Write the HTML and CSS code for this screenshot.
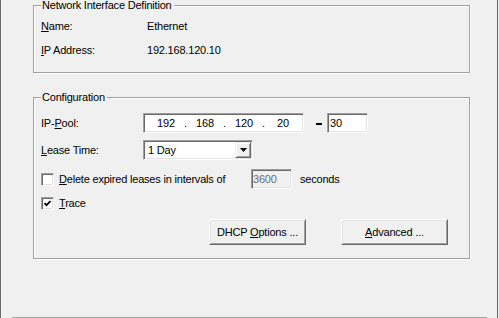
FILE: index.html
```html
<!DOCTYPE html>
<html lang="en">
<head>
  <meta charset="UTF-8">
  <title>DHCP Server – Ethernet</title>
  <link rel="stylesheet" href="styles.css">
</head>
<body>
  <div class="frame">
    <div class="groups">
      <fieldset class="group group-nic">
        <legend>Network Interface Definition</legend>
        <div class="info-row"><span class="info-label"><u>N</u>ame:</span><span>Ethernet</span></div>
        <div class="info-row"><span class="info-label"><u>I</u>P Address:</span><span>192.168.120.10</span></div>
      </fieldset>

      <fieldset class="group group-config">
        <legend>Configuration</legend>
        <div class="field-row">
          <span class="field-label">IP-<u>P</u>ool:</span>
          <div class="ip-box">
            <span class="octet">192</span><span class="dot">.</span>
            <span class="octet">168</span><span class="dot">.</span>
            <span class="octet">120</span><span class="dot">.</span>
            <span class="octet">20</span>
          </div>
          <span class="dash"></span>
          <div class="text-box range-end">30</div>
        </div>

        <div class="field-row lease-row">
          <span class="field-label"><u>L</u>ease Time:</span>
          <div class="combo">
            <span class="combo-value">1 Day</span>
            <span class="combo-btn">
              <svg width="7" height="4" viewBox="0 0 7 4"><path d="M0 0h7L3.5 4z" fill="#000"/></svg>
            </span>
          </div>
        </div>

        <div class="check-row delete-row">
          <span class="check"></span>
          <span class="check-text"><u>D</u>elete expired leases in intervals of</span>
          <div class="text-box interval disabled">3600</div>
          <span class="unit">seconds</span>
        </div>

        <div class="check-row trace-row">
          <span class="check">
            <svg width="9" height="9" viewBox="0 0 9 9"><path d="M1.5 4.2l2 2 4-4" fill="none" stroke="#000" stroke-width="1.8"/></svg>
          </span>
          <span class="check-text"><u>T</u>race</span>
        </div>

        <div class="button-row">
          <button class="btn btn-options">DHCP <u>O</u>ptions ...</button>
          <button class="btn btn-advanced"><u>A</u>dvanced ...</button>
        </div>
      </fieldset>
    </div>
    <div class="next-group"></div>
  </div>
</body>
</html>
```

FILE: styles.css
```css
body { margin:0; background:#f0f0f0; font-family:"Liberation Sans", Arial, sans-serif; font-size:11px; line-height:13px; letter-spacing:-0.2px; color:#000; }
u { text-decoration:underline; text-underline-offset:1px; }

.frame { width:498px; height:318px; box-sizing:border-box; border-left:1px solid #696969; border-right:1px solid #696969; overflow:hidden; }
.groups { padding-left:32px; }

.group { width:437px; box-sizing:border-box; margin:0; border:1px solid #a0a0a0; box-shadow:1px 1px 0 #fff, inset 1px 1px 0 #fff; padding:0 7px; }
.group legend { padding:0 2px 0 1px; background:#f0f0f0; line-height:13px; }
.group-nic { margin-top:-1px; padding-top:8px; padding-bottom:15px; }
.group-config { margin-top:18px; padding-top:9px; padding-bottom:13px; }

.info-row { display:flex; }
.info-row + .info-row { margin-top:11px; }
.info-label { width:106px; }

.field-row { display:flex; align-items:center; height:20px; }
.lease-row { margin-top:7px; }
.field-label { width:102px; }

/* sunken 3d edit boxes */
.ip-box, .text-box, .combo, .check { box-sizing:border-box; background:#fff; border:1px solid; border-color:#a0a0a0 #fff #fff #a0a0a0; box-shadow:inset 1px 1px 0 #696969, inset -1px -1px 0 #e3e3e3; }

.ip-box { display:flex; align-items:center; width:161px; height:20px; padding-left:7px; }
.octet { width:30px; text-align:center; }
.dot { width:9px; text-align:center; }
.dash { width:6px; height:2px; background:#000; margin:2px 5px 0 12px; }
.text-box { height:20px; padding:3px 2px 0; }
.range-end { width:41px; }

.combo { display:flex; width:110px; height:20px; padding:1px; }
.combo-value { flex:1; padding:2px 0 0 3px; }
.combo-btn { width:16px; height:16px; box-sizing:border-box; display:flex; align-items:center; justify-content:center; background:#f0f0f0; border:1px solid; border-color:#f0f0f0 #696969 #696969 #f0f0f0; box-shadow:inset 1px 1px 0 #fff, inset -1px -1px 0 #a0a0a0; }

.check-row { display:flex; align-items:center; }
.delete-row { margin-top:9px; height:20px; }
.trace-row { margin-top:8px; height:13px; }
.check { width:13px; height:13px; display:flex; align-items:center; justify-content:center; }
.check-text { margin-left:5px; }
.delete-row .check-text { width:192px; }
.interval { width:41px; padding-left:1px; }
.disabled { background:#f0f0f0; color:#6d6d6d; }
.unit { margin-left:8px; }

.button-row { display:flex; justify-content:flex-end; gap:35px; margin-top:9px; padding-right:14px; }
.btn { height:26px; box-sizing:border-box; font:inherit; letter-spacing:inherit; color:#000; background:#f0f0f0; border:1px solid; border-color:#fff #696969 #696969 #fff; box-shadow:inset 1px 1px 0 #e3e3e3, inset -1px -1px 0 #a0a0a0; padding:0; }
.btn-options { width:97px; }
.btn-advanced { width:107px; }

.next-group { margin:58px 10px 0 11px; border-top:1px solid #a0a0a0; height:4px; }
```
